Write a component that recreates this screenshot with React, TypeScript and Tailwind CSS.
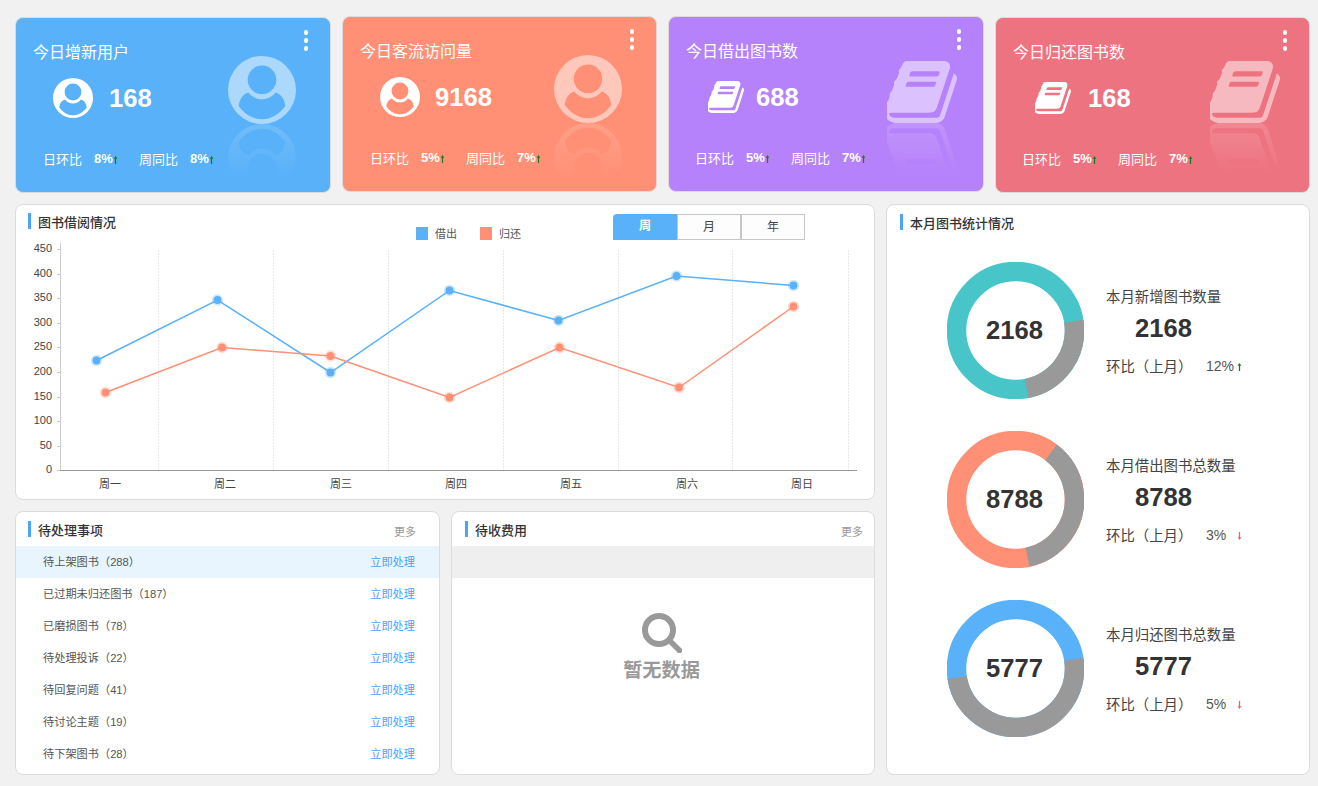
import React from "react";

const BOOK_PATH =
  "M1639 478q40 57 18 129l-275 906q-19 64-76.5 107.5t-122.5 43.5h-923q-77 0-148.5-53.5t-99.5-131.5q-24-67-2-127 0-4 3-27t4-37q1-8-3-21.5t-3-19.5q2-11 8-21t16.5-23.5 16.5-23.5q23-38 45-91.5t30-91.5q3-10 .5-30t-.5-28q3-11 17-28t17-23q21-36 42-92t25-90q1-9-2.5-32t.5-28q4-13 22-30.5t22-22.5q19-26 42.5-84.5t27.5-96.5q1-8-3-25.5t-2-26.5q2-8 9-18t18-23 17-21q8-12 16.5-30.5t15-35 16-36 19.5-32 26.5-23.5 36-11.5 47.5 5.5l-1 3q38-9 51-9h761q74 0 114 56t18 130l-274 906q-36 119-71.5 153.5t-128.5 34.5h-869q-27 0-38 15-11 16-1 43 24 70 144 70h923q29 0 56-15.5t35-41.5l300-987q7-22 5-57 38 15 59 43zm-1064 2q-4 13 2 22.5t20 9.5h608q13 0 25.5-9.5t16.5-22.5l21-64q4-13-2-22.5t-20-9.5h-608q-13 0-25.5 9.5t-16.5 22.5zm-83 256q-4 13 2 22.5t20 9.5h608q13 0 25.5-9.5t16.5-22.5l21-64q4-13-2-22.5t-20-9.5h-608q-13 0-25.5 9.5t-16.5 22.5z";

function UserIcon({ className }: { className?: string }) {
  return (
    <svg viewBox="0 0 100 100" className={className} fill="currentColor">
      <path
        fillRule="evenodd"
        d="M50 0a50 50 0 1 0 0 100a50 50 0 1 0 0-100zM50 14a21 21 0 1 1 0 42a21 21 0 1 1 0-42zM30 53.5C35 60 42 63.5 50 63.5C58 63.5 65 60 70 53.5C78 56 83 63 84.3 73.5C75 86 63 93 50 93C37 93 25 86 15.7 73.5C17 63 22 56 30 53.5Z"
      />
    </svg>
  );
}

function BookIcon({ className }: { className?: string }) {
  return (
    <svg viewBox="64 128 1600 1536" className={className} fill="currentColor" preserveAspectRatio="none">
      <path d={BOOK_PATH} />
    </svg>
  );
}

function Arrow({ up }: { up: boolean }) {
  return (
    <svg viewBox="0 0 5 9" className={`h-2 w-[5px] ${up ? "text-[#1b7a1e]" : "rotate-180 text-[#e8606a]"}`} fill="currentColor">
      <path d="M2.5 0L4.6 3H3.2V9H1.8V3H.4Z" />
    </svg>
  );
}

interface StatCard {
  title: string;
  value: string;
  day: string;
  week: string;
  box: string;
  book: boolean;
  mark: string;
  iconPad: string;
  numGap: string;
  statPad: string;
}

const statCards: StatCard[] = [
  { title: "今日增新用户", value: "168", day: "8%", week: "8%", box: "w-[316px] mt-px bg-[#58b1f9]", book: false, mark: "left-[212px] top-[38px]", iconPad: "pl-5", numGap: "ml-4", statPad: "pl-[10px]" },
  { title: "今日客流访问量", value: "9168", day: "5%", week: "7%", box: "w-[315px] bg-[#ff9075]", book: false, mark: "left-[211px] top-[38px]", iconPad: "pl-5", numGap: "ml-[15px]", statPad: "pl-[10px]" },
  { title: "今日借出图书数", value: "688", day: "5%", week: "7%", box: "w-[316px] bg-[#b682fb]", book: true, mark: "left-[218px] top-[44px]", iconPad: "pl-[22px]", numGap: "ml-[12px]", statPad: "pl-[9px]" },
  { title: "今日归还图书数", value: "168", day: "5%", week: "7%", box: "w-[315px] mt-px bg-[#ee7380]", book: true, mark: "left-[214px] top-[43px]", iconPad: "pl-[22px]", numGap: "ml-[17px]", statPad: "pl-[9px]" },
];

function Stat({ label, value }: { label: string; value: string }) {
  return (
    <div className="flex w-[96px] items-center">
      <span className="w-[51px] text-[13px] leading-5">{label}</span>
      <span className="-mt-[3px] text-[13px] font-semibold leading-5">{value}</span>
      <Arrow up />
    </div>
  );
}

function TopCard({ card }: { card: StatCard }) {
  return (
    <div className={`relative h-[176px] overflow-hidden rounded-lg border border-[#dcdcdc] text-white ${card.box}`}>
      <div className="absolute right-[22px] top-3 flex flex-col gap-[3.5px]">
        <div className="h-[4.5px] w-[4.5px] rounded-full bg-white" />
        <div className="h-[4.5px] w-[4.5px] rounded-full bg-white" />
        <div className="h-[4.5px] w-[4.5px] rounded-full bg-white" />
      </div>
      <div className={`absolute text-white/50 [-webkit-box-reflect:below_0_linear-gradient(transparent_20%,rgba(255,255,255,0.3))] ${card.mark}`}>
        {card.book ? <BookIcon className="block h-[62px] w-[70px]" /> : <UserIcon className="block h-[68px] w-[68px]" />}
      </div>
      <div className="pl-[17px] pt-[25px]">
        <div className="text-[16px] leading-5">{card.title}</div>
        <div className={`mt-[15px] flex h-10 items-center ${card.iconPad}`}>
          {card.book ? <BookIcon className="h-8 w-9" /> : <UserIcon className="h-10 w-10" />}
          <span className={`text-[25.6px] font-bold leading-8 ${card.numGap}`}>{card.value}</span>
        </div>
        <div className={`mt-[32px] flex ${card.statPad}`}>
          <Stat label="日环比" value={card.day} />
          <Stat label="周同比" value={card.week} />
        </div>
      </div>
    </div>
  );
}

function PanelTitle({ children }: { children: React.ReactNode }) {
  return (
    <div className="flex items-start">
      <div className="h-4 w-[3px] bg-[#4aa4f8]" />
      <div className="ml-[7px] mt-[2px] text-[13px] font-medium leading-4 text-[#333]">{children}</div>
    </div>
  );
}

const blueLine: [number, number][] = [[96.5, 360.5], [217.5, 300], [330.5, 372.5], [449.5, 290.5], [558.5, 320.5], [676.5, 276], [793.5, 285.5]];
const orangeLine: [number, number][] = [[105.5, 392.5], [222, 347.5], [330.5, 356], [449.5, 397.5], [559.5, 347.5], [679, 387.5], [793.5, 306.5]];
const yLabels = ["450", "400", "350", "300", "250", "200", "150", "100", "50", "0"];
const xLabels = ["周一", "周二", "周三", "周四", "周五", "周六", "周日"];
const xCenters = [110, 225, 341, 456, 571, 687, 802];
const gridLines = [158.5, 273.5, 388.5, 503.5, 618.5, 732.5, 848.5];

function Series({ points, color }: { points: [number, number][]; color: string }) {
  return (
    <g>
      <polyline points={points.map((p) => p.join(",")).join(" ")} fill="none" stroke={color} strokeWidth="1.5" />
      {points.map((p, i) => (
        <g key={i}>
          <circle cx={p[0]} cy={p[1]} r="5.7" fill={color} opacity="0.3" />
          <circle cx={p[0]} cy={p[1]} r="3.9" fill={color} />
        </g>
      ))}
    </g>
  );
}

function LineChart() {
  return (
    <svg viewBox="16 240 858 259" className="block h-[259px] w-[858px]">
      {gridLines.map((x) => (
        <line key={x} x1={x} x2={x} y1="250" y2="470" stroke="#e8e8e8" strokeWidth="1" strokeDasharray="2 1" />
      ))}
      <line x1="60.5" x2="60.5" y1="243" y2="470" stroke="#ccc" />
      <line x1="60" x2="857" y1="470.5" y2="470.5" stroke="#999" />
      {yLabels.map((t, i) => {
        const y = 249 + i * 24.6;
        return (
          <g key={t}>
            <line x1="57" x2="60" y1={Math.round(y) + 0.5} y2={Math.round(y) + 0.5} stroke="#ccc" />
            <text x="52" y={y + 3} textAnchor="end" fontSize="11" fill="#444">
              {t}
            </text>
          </g>
        );
      })}
      {xLabels.map((t, i) => (
        <text key={t} x={xCenters[i]} y="488" textAnchor="middle" fontSize="11" fill="#444">
          {t}
        </text>
      ))}
      <Series points={blueLine} color="#58b1f9" />
      <Series points={orangeLine} color="#ff9075" />
    </svg>
  );
}

function ChartPanel() {
  return (
    <div className="h-[296px] w-[860px] overflow-hidden rounded-lg border border-[#dcdcdc] bg-white">
      <div className="flex h-[35px]">
        <div className="flex-1 pl-3 pt-2">
          <PanelTitle>图书借阅情况</PanelTitle>
        </div>
        <div className="mr-[92px] mt-[22px] flex text-[11px] leading-[13px] text-[#555]">
          <div className="h-[13px] w-3 bg-[#58b1f9]" />
          <span className="ml-[7px] mt-px">借出</span>
          <div className="ml-[23px] h-[13px] w-3 bg-[#ff9075]" />
          <span className="ml-[7px] mt-px">归还</span>
        </div>
        <div className="mr-[69px] mt-[9px] flex h-[26px] text-[12px] leading-[24px]">
          <div className="w-16 rounded-tl-sm bg-[#58b1f9] text-center font-bold text-white">周</div>
          <div className="w-16 border border-[#c6c6c6] bg-[#fdfdfd] text-center text-[#444]">月</div>
          <div className="w-16 border border-[#c6c6c6] bg-[#fdfdfd] text-center text-[#444]">年</div>
        </div>
      </div>
      <LineChart />
    </div>
  );
}

const todoRows = [
  "待上架图书（288）",
  "已过期未归还图书（187）",
  "已磨损图书（78）",
  "待处理投诉（22）",
  "待回复问题（41）",
  "待讨论主题（19）",
  "待下架图书（28）",
];

function TodoPanel() {
  return (
    <div className="h-[264px] w-[425px] overflow-hidden rounded-lg border border-[#dcdcdc] bg-white">
      <div className="flex h-[34px] items-start justify-between pl-3 pr-[23px] pt-[9px]">
        <PanelTitle>待处理事项</PanelTitle>
        <span className="mt-[3px] text-[11px] leading-4 text-[#999]">更多</span>
      </div>
      {todoRows.map((row, i) => (
        <div key={row} className={`flex h-8 items-center justify-between pl-[27px] pr-6 text-[11.2px] ${i === 0 ? "bg-[#e9f5fe]" : ""}`}>
          <span className="text-[#555]">{row}</span>
          <a className="text-[#4ba3f7]">立即处理</a>
        </div>
      ))}
    </div>
  );
}

function FeePanel() {
  return (
    <div className="h-[264px] w-[424px] overflow-hidden rounded-lg border border-[#dcdcdc] bg-white">
      <div className="flex h-[34px] items-start justify-between pl-[13px] pr-[11px] pt-[9px]">
        <PanelTitle>待收费用</PanelTitle>
        <span className="mt-[3px] text-[11px] leading-4 text-[#999]">更多</span>
      </div>
      <div className="h-8 bg-[#efefef]" />
      <div className="flex flex-col items-center pr-[3px] pt-[35px]">
        <svg viewBox="0 0 40 40" className="h-10 w-10">
          <circle cx="17" cy="17" r="14" fill="none" stroke="#999" strokeWidth="6" />
          <line x1="28" y1="28" x2="37.5" y2="37.5" stroke="#999" strokeWidth="5.5" strokeLinecap="round" />
        </svg>
        <div className="mt-[6px] text-[19.2px] font-bold leading-6 text-[#999]">暂无数据</div>
      </div>
    </div>
  );
}

interface DonutRow {
  title: string;
  value: string;
  rate: string;
  up: boolean;
  color: string;
  grayStart: number;
  grayEnd: number;
}

const donutRows: DonutRow[] = [
  { title: "本月新增图书数量", value: "2168", rate: "12%", up: true, color: "#48c5c8", grayStart: 81, grayEnd: 169 },
  { title: "本月借出图书总数量", value: "8788", rate: "3%", up: false, color: "#ff9075", grayStart: 37, grayEnd: 168 },
  { title: "本月归还图书总数量", value: "5777", rate: "5%", up: false, color: "#58b1f9", grayStart: 81, grayEnd: 261 },
];

function Donut({ row }: { row: DonutRow }) {
  const c = 2 * Math.PI * 59;
  const len = ((row.grayEnd - row.grayStart) / 360) * c;
  return (
    <div className="relative h-[137px] w-[137px]">
      <svg viewBox="0 0 137 137" className="block h-[137px] w-[137px]">
        <circle cx="68.5" cy="68.5" r="59" fill="none" stroke={row.color} strokeWidth="19.5" />
        <circle
          cx="68.5"
          cy="68.5"
          r="59"
          fill="none"
          stroke="#999"
          strokeWidth="19.5"
          strokeDasharray={`${len} ${c - len}`}
          transform={`rotate(${row.grayStart - 90} 68.5 68.5)`}
        />
      </svg>
      <div className="absolute inset-0 flex items-center justify-center pr-[2px] text-[25.6px] font-bold text-[#333]">{row.value}</div>
    </div>
  );
}

function MonthPanel() {
  return (
    <div className="h-[571px] w-[424px] overflow-hidden rounded-lg border border-[#dcdcdc] bg-white">
      <div className="h-[57px] pl-[13px] pt-[9px]">
        <PanelTitle>本月图书统计情况</PanelTitle>
      </div>
      {donutRows.map((row) => (
        <div key={row.title} className="flex h-[169px] items-start pl-[60px]">
          <Donut row={row} />
          <div className="ml-[22px] pt-[25px] text-[14.4px] text-[#444]">
            <div className="leading-5">{row.title}</div>
            <div className="mt-[5px] w-[115px] text-center text-[25.6px] font-bold leading-8 text-[#333]">{row.value}</div>
            <div className="mt-[13px] flex items-center leading-5">
              <span className="w-[100px]">环比（上月）</span>
              <span className="-mt-[3px] w-[31px] text-[14px] text-[#555]">{row.rate}</span>
              <Arrow up={row.up} />
            </div>
          </div>
        </div>
      ))}
    </div>
  );
}

export default function App() {
  return (
    <div
      className="h-[786px] w-[1318px] overflow-hidden bg-[#f1f1f1] pl-[15px] pt-4"
      style={{ fontFamily: '"Liberation Sans", "Noto Sans CJK SC", sans-serif' }}
    >
      <div className="flex items-start gap-[11px]">
        {statCards.map((card) => (
          <TopCard key={card.title} card={card} />
        ))}
      </div>
      <div className="mt-[11px] flex gap-[11px]">
        <div className="flex flex-col gap-[11px]">
          <ChartPanel />
          <div className="flex gap-[11px]">
            <TodoPanel />
            <FeePanel />
          </div>
        </div>
        <MonthPanel />
      </div>
    </div>
  );
}
